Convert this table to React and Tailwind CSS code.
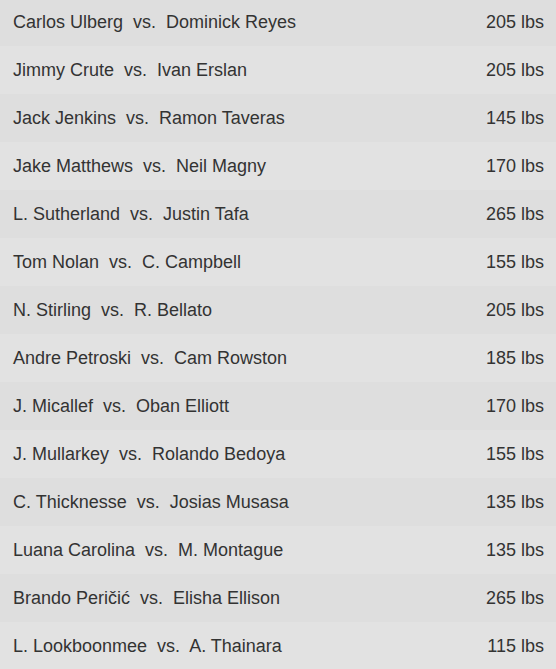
import React from "react";

const bouts = [
  ["Carlos Ulberg", "Dominick Reyes", "205 lbs"],
  ["Jimmy Crute", "Ivan Erslan", "205 lbs"],
  ["Jack Jenkins", "Ramon Taveras", "145 lbs"],
  ["Jake Matthews", "Neil Magny", "170 lbs"],
  ["L. Sutherland", "Justin Tafa", "265 lbs"],
  ["Tom Nolan", "C. Campbell", "155 lbs"],
  ["N. Stirling", "R. Bellato", "205 lbs"],
  ["Andre Petroski", "Cam Rowston", "185 lbs"],
  ["J. Micallef", "Oban Elliott", "170 lbs"],
  ["J. Mullarkey", "Rolando Bedoya", "155 lbs"],
  ["C. Thicknesse", "Josias Musasa", "135 lbs"],
  ["Luana Carolina", "M. Montague", "135 lbs"],
  ["Brando Peričić", "Elisha Ellison", "265 lbs"],
  ["L. Lookboonmee", "A. Thainara", "115 lbs"],
];

export default function App() {
  return (
    <div className="w-[556px] h-[669px] overflow-hidden bg-[#dedede] font-['Liberation_Sans',Arial,sans-serif] text-[18px] text-[#333333]">
      <div className="-mt-[2px]">
        {bouts.map(([a, b, w], i) => (
          <div
            key={a}
            className={`flex items-center justify-between h-[48px] pl-[13px] pr-[12px] ${i % 2 === 0 ? "bg-[#dedede]" : "bg-[#e2e2e2]"}`}
          >
            <span className="whitespace-pre">{a}  vs.  {b}</span>
            <span>{w}</span>
          </div>
        ))}
      </div>
    </div>
  );
}
